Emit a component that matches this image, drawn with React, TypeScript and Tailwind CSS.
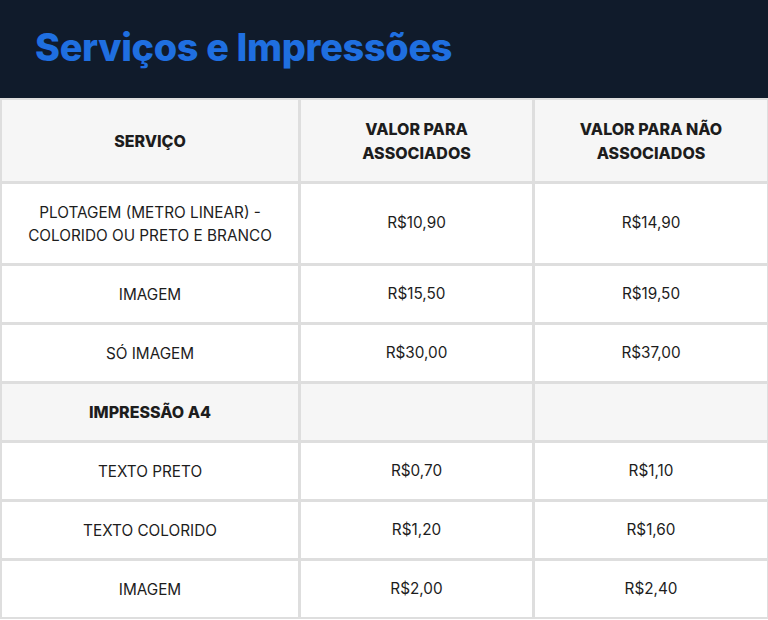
import React from "react";

const rows: { s: React.ReactNode; a: string; b: string; section?: boolean; tall?: boolean }[] = [
  { s: <>PLOTAGEM (METRO LINEAR) -<br />COLORIDO OU PRETO E BRANCO</>, a: "R$10,90", b: "R$14,90", tall: true },
  { s: "IMAGEM", a: "R$15,50", b: "R$19,50" },
  { s: "SÓ IMAGEM", a: "R$30,00", b: "R$37,00" },
  { s: "IMPRESSÃO A4", a: "", b: "", section: true },
  { s: "TEXTO PRETO", a: "R$0,70", b: "R$1,10" },
  { s: "TEXTO COLORIDO", a: "R$1,20", b: "R$1,60" },
  { s: "IMAGEM", a: "R$2,00", b: "R$2,40" },
];

export default function App() {
  const font = { fontFamily: "Inter, 'Noto Sans', sans-serif" };
  return (
    <div className="w-[768px] h-[620px] bg-white overflow-hidden" style={font}>
      <div className="h-[98px] bg-[#101b2b] flex items-center pl-[35px]">
        <h1 className="text-[37.8px] font-extrabold text-[#1f6fe0] tracking-[-0.3px] leading-none pb-[2px]">
          Serviços e Impressões
        </h1>
      </div>
      <div className="grid grid-cols-[296px_231px_232px] gap-[3px] bg-[#dedede] p-[2px] pt-[2px] text-[15.3px] text-[#1d1d1d]">
        <div className="h-[81px] bg-[#f6f6f6] flex items-center justify-center font-extrabold text-[16px] text-center leading-[24px]">SERVIÇO</div>
        <div className="h-[81px] bg-[#f6f6f6] flex items-center justify-center font-extrabold text-[16px] text-center leading-[24px]">VALOR PARA<br />ASSOCIADOS</div>
        <div className="h-[81px] bg-[#f6f6f6] flex items-center justify-center font-extrabold text-[16px] text-center leading-[24px]">VALOR PARA NÃO<br />ASSOCIADOS</div>
        {rows.map((r, i) => {
          const h = r.tall ? "h-[79px]" : "h-[56px]";
          const bg = r.section ? "bg-[#f6f6f6]" : "bg-white";
          return (
            <React.Fragment key={i}>
              <div className={`${h} ${bg} flex items-center justify-center text-center leading-[23px] ${r.section ? "font-extrabold text-[16px]" : ""}`}>{r.s}</div>
              <div className={`${h} ${bg} flex items-center justify-center`}>{r.a}</div>
              <div className={`${h} ${bg} flex items-center justify-center`}>{r.b}</div>
            </React.Fragment>
          );
        })}
      </div>
    </div>
  );
}
